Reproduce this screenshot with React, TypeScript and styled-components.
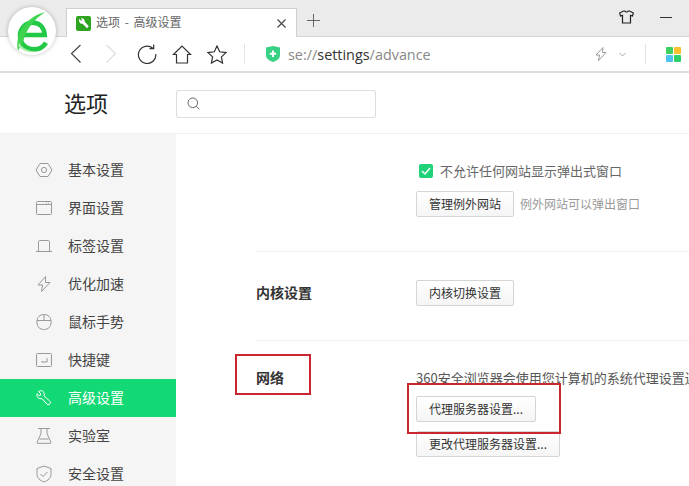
import React from 'react'
import styled, { createGlobalStyle } from 'styled-components'

// Types
type NavItem = { label: string; icon: React.ReactNode; active?: boolean }

const GlobalStyle = createGlobalStyle`
  html, body {
    margin: 0;
    padding: 0;
    background: #fff;
    overflow: hidden;
  }
  body {
    font-family: "Noto Sans CJK SC", "Noto Sans", sans-serif;
    color: #333;
  }
`

const navIconProps = { width: 18, height: 18, viewBox: '0 0 18 18', fill: 'none', stroke: 'currentColor', strokeWidth: 1 }

const navItems: NavItem[] = [
  {
    label: '基本设置',
    icon: (
      <svg {...navIconProps}>
        <path d="M5 2.500h8L17 9l-4 6.500H5L1 9z" />
        <circle cx="9" cy="9" r="2.600" />
      </svg>
    ),
  },
  {
    label: '界面设置',
    icon: (
      <svg {...navIconProps}>
        <rect x="1.500" y="2.500" width="15" height="13" rx="1" />
        <path d="M1.500 5.500h15M11 4h.8M13 4h.8" />
      </svg>
    ),
  },
  {
    label: '标签设置',
    icon: (
      <svg {...navIconProps}>
        <path d="M3.500 14V4.500a1 1 0 0 1 1-1h9a1 1 0 0 1 1 1V14M1 14.500h16" />
      </svg>
    ),
  },
  {
    label: '优化加速',
    icon: (
      <svg {...navIconProps}>
        <path d="M10.500 1.500 3 10h4.500l-1 6.500L15 7.500h-4.500z" />
      </svg>
    ),
  },
  {
    label: '鼠标手势',
    icon: (
      <svg {...navIconProps}>
        <rect x="2" y="1.500" width="14" height="15" rx="6.500" />
        <path d="M2 7.500h14M9 1.500v6" />
      </svg>
    ),
  },
  {
    label: '快捷键',
    icon: (
      <svg {...navIconProps}>
        <rect x="1.500" y="2.500" width="15" height="13" rx="1" />
        <path d="M12 7v4H6.500M6.500 11l1-1" />
      </svg>
    ),
  },
  {
    label: '高级设置',
    active: true,
    icon: (
      <svg {...navIconProps}>
        <path d="M6.500 1.500 3.500 2.500 6 5 4.500 7 2 4.700C1.300 7 2.500 9.700 6 9.800l1-.3 5 5.700c1.200 1 3.300.2 3.500-1.500 0-.7-.4-1.300-1-1.900L9 7C9.600 4.300 8.800 2.300 6.500 1.500z" />
      </svg>
    ),
  },
  {
    label: '实验室',
    icon: (
      <svg {...navIconProps}>
        <path d="M3 1.500h12M6 1.500v5L2 15.500a.6.6 0 0 0 .6.8h12.800a.6.6 0 0 0 .6-.8L12 6.500v-5M4.500 12h9" />
      </svg>
    ),
  },
  {
    label: '安全设置',
    icon: (
      <svg {...navIconProps}>
        <path d="M9 1 2 3.500V9c0 4 3 6.500 7 8 4-1.500 7-4 7-8V3.500z" />
        <path d="M5.500 9 8 11.500l4.500-4.500" />
      </svg>
    ),
  },
]

export default function App(): JSX.Element {
  return (
    <Page>
      <GlobalStyle />

      <TabStrip>
        <Tab>
          <TabIcon>
            <svg width="15" height="15" viewBox="0 0 15 15">
              <rect width="15" height="15" rx="2" fill="#2ea31f" />
              <path d="M3.200 2.800 5.300 5 6 3.600 4.700 2.400C6.800 1.700 9 3.200 8.600 5.500L12.800 10.300 11 12.200 6.600 7.800C4.300 8.300 2.400 5.600 3.200 2.800z" fill="#fff" />
            </svg>
          </TabIcon>
          <TabTitle>选项 - 高级设置</TabTitle>
          <TabClose>
            <svg width="9" height="9" viewBox="0 0 9 9" stroke="#444" strokeWidth="1.100">
              <path d="M.5.500l8 8M8.500.500l-8 8" />
            </svg>
          </TabClose>
        </Tab>
        <NewTab>
          <svg width="13" height="13" viewBox="0 0 13 13" stroke="#666" strokeWidth="1">
            <path d="M6.500 0v13M0 6.500h13" />
          </svg>
        </NewTab>
        <WindowControls>
          <svg width="15" height="14" viewBox="0 0 15 14" fill="none" stroke="#222" strokeWidth="1.200">
            <path d="M4.500 1h1.300c.4 1.300 3 1.300 3.400 0h1.300L14.300 3l-.8 3-2-.6V13H3.500V5.400l-2 .6L.7 3z" />
          </svg>
          <Minimize />
        </WindowControls>
      </TabStrip>

      <Logo>
        <svg width="48" height="48" viewBox="24 21 144 144" fill="none">
          <path
            d="M62 105H134C132 80 116 68 98 68 76 68 60 86 60 108 60 132 80 148 102 148 118 148 130 141 138 128"
            stroke="#22c944"
            strokeWidth="14"
          />
          <path d="M54 152C44 108 72 52 136 36 104 56 80 85 70 122z" fill="#3fd44f" />
          <path d="M58 128C66 144 84 152 106 155 84 160 62 150 54 136z" fill="#a6eca6" />
        </svg>
      </Logo>

      <Toolbar>
        <NavButtons>
          <ToolIcon $gap={15}>
            <svg width="12" height="20" viewBox="0 0 12 20" fill="none" stroke="#444" strokeWidth="1.200">
              <path d="M10.500 1 1.500 9.500l9 9" />
            </svg>
          </ToolIcon>
          <ToolIcon $gap={16}>
            <svg width="12" height="20" viewBox="0 0 12 20" fill="none" stroke="#ddd" strokeWidth="1.200">
              <path d="M1.500 1l9 8.500-9 9" />
            </svg>
          </ToolIcon>
          <ToolIcon $gap={15}>
            <svg width="20" height="20" viewBox="0 0 20 20" fill="none" stroke="#333" strokeWidth="1.200">
              <path d="M15.800 4.200A8.700 8.700 0 1 0 18.800 10" />
              <path d="M12.500 4.700h4.200V.5" />
            </svg>
          </ToolIcon>
          <ToolIcon $gap={15}>
            <svg width="20" height="19" viewBox="0 0 20 19" fill="none" stroke="#333" strokeWidth="1.200">
              <path d="M1.500 9.500 10 1l8.500 8.500h-3V18h-11V9.500z" />
            </svg>
          </ToolIcon>
          <ToolIcon $gap={0}>
            <svg width="20" height="19" viewBox="0 0 20 19" fill="none" stroke="#333" strokeWidth="1.200">
              <path d="M10 1l2.700 5.800 6.300.8-4.600 4.300 1.200 6.200L10 15l-5.600 3.100 1.200-6.200L1 7.600l6.300-.8z" />
            </svg>
          </ToolIcon>
        </NavButtons>
        <ToolSeparator $left={17} />
        <ShieldWrap>
          <svg width="14" height="16" viewBox="0 0 14 16">
            <path d="M7 0 14 1.500V9c0 3.500-3 5.700-7 7-4-1.300-7-3.500-7-7V1.500z" fill="#36d183" />
            <path d="M7 4.500v6.500M3.800 7.700h6.400" stroke="#fff" strokeWidth="2" />
          </svg>
        </ShieldWrap>
        <Url>
          se://<strong>settings</strong>/advance
        </Url>
        <UrlActions>
          <svg width="12" height="14" viewBox="0 0 12 14" fill="none" stroke="#999" strokeWidth="1">
            <path d="M8 .5 1 8h3.500L3.500 13.500 11 5.500H7.500z" />
          </svg>
          <svg width="7" height="5" viewBox="0 0 7 5" fill="none" stroke="#aaa" strokeWidth="1">
            <path d="M.5 1 3.500 4l3-3" />
          </svg>
        </UrlActions>
        <ToolSeparator $left={7} />
        <AppsGrid>
          <AppsCell $color="#3fcf5e" />
          <AppsCell $color="#fbc02d" />
          <AppsCell $color="#4fc3f0" />
          <AppsCell $color="#2fd06a" />
        </AppsGrid>
      </Toolbar>

      <Header>
        <HeaderTitle>选项</HeaderTitle>
        <SearchBox>
          <svg width="13" height="13" viewBox="0 0 13 13" fill="none" stroke="#666" strokeWidth="1">
            <circle cx="5.800" cy="5.800" r="4.800" />
            <path d="M9.300 9.300l3 3" />
          </svg>
        </SearchBox>
      </Header>

      <Main>
        <Sidebar>
          {navItems.map((item) => (
            <NavRow key={item.label} $active={item.active}>
              <NavIcon $active={item.active}>{item.icon}</NavIcon>
              <NavLabel>{item.label}</NavLabel>
            </NavRow>
          ))}
        </Sidebar>

        <Content>
          <Section $pad="27px 0 34px">
            <SectionLabel $lineHeight={24} />
            <SectionBody>
              <CheckRow>
                <CheckBox>
                  <svg width="10" height="8" viewBox="0 0 10 8" fill="none" stroke="#fff" strokeWidth="1.400">
                    <path d="M1 4l3 3 5-6" />
                  </svg>
                </CheckBox>
                <CheckText>不允许任何网站显示弹出式窗口</CheckText>
              </CheckRow>
              <ButtonRow>
                <Button>管理例外网站</Button>
                <Hint>例外网站可以弹出窗口</Hint>
              </ButtonRow>
            </SectionBody>
          </Section>

          <Section $pad="28px 0 34px">
            <SectionLabel $lineHeight={24}>内核设置</SectionLabel>
            <SectionBody>
              <Button>内核切换设置</Button>
            </SectionBody>
          </Section>

          <Section $pad="27px 0 0" $last>
            <SectionLabel $lineHeight={18}>网络</SectionLabel>
            <SectionBody>
              <Description>360安全浏览器会使用您计算机的系统代理设置连接到网络</Description>
              <Stack>
                <Button>代理服务器设置...</Button>
                <Button>更改代理服务器设置...</Button>
              </Stack>
            </SectionBody>
          </Section>
        </Content>
      </Main>

      <Annotation $left={235} $top={354} $width={76} $height={41} />
      <Annotation $left={407} $top={383} $width={154} $height={51} />
    </Page>
  )
}

const Page = styled.div`
  position: relative;
  width: 689px;
  height: 486px;
  overflow: hidden;
  background: #fff;
`

const TabStrip = styled.div`
  display: flex;
  align-items: flex-end;
  height: 36px;
  padding-left: 66px;
  background: #ebebeb;
  border-bottom: 1px solid #d4d4d4;
`

const Tab = styled.div`
  display: flex;
  align-items: center;
  width: 231px;
  height: 29px;
  margin-bottom: -1px;
  padding: 0 10px 0 9px;
  box-sizing: border-box;
  background: #fff;
  border: 1px solid #cfcfcf;
  border-bottom: none;
`

const TabIcon = styled.span`
  display: flex;
  margin-right: 5px;
`

const TabTitle = styled.span`
  flex: 1;
  margin-bottom: 3px;
  font-size: 12px;
  word-spacing: 2px;
  color: #666;
  white-space: pre;
`

const TabClose = styled.span`
  display: flex;
`

const NewTab = styled.span`
  display: flex;
  margin: 0 0 9px 10px;
`

const WindowControls = styled.div`
  display: flex;
  align-items: center;
  gap: 26px;
  margin-left: auto;
  margin-right: 17px;
  margin-bottom: 12px;
`

const Minimize = styled.span`
  width: 12px;
  height: 1px;
  background: #333;
`

const Logo = styled.div`
  position: absolute;
  left: 8px;
  top: 7px;
  width: 48px;
  height: 48px;
  border-radius: 50%;
  background: #fff;
  box-shadow: 0 0 4px rgba(0, 0, 0, 0.25);
`

const Toolbar = styled.div`
  display: flex;
  align-items: center;
  height: 34px;
  padding-left: 66px;
  border-bottom: 2px solid #dedede;
`

const NavButtons = styled.div`
  display: flex;
  align-items: center;
`

const ToolIcon = styled.span<{ $gap: number }>`
  display: flex;
  justify-content: center;
  width: 20px;
  margin-right: ${(p) => p.$gap}px;
`

const ToolSeparator = styled.span<{ $left: number }>`
  width: 1px;
  height: 20px;
  background: #e2e2e2;
  margin-left: ${(p) => p.$left}px;
`

const ShieldWrap = styled.span`
  display: flex;
  margin-left: 21px;
`

const Url = styled.div`
  margin-left: 8px;
  font-family: "Open Sans", "Noto Sans", sans-serif;
  font-size: 14.4px;
  color: #888;
  strong {
    font-weight: 400;
    color: #333;
  }
`

const UrlActions = styled.div`
  display: flex;
  align-items: center;
  gap: 12px;
  margin-left: auto;
  margin-right: 12px;
`

const AppsGrid = styled.div`
  display: grid;
  grid-template-columns: 7px 7px;
  grid-auto-rows: 7px;
  gap: 1px;
  margin: 0 8px 0 20px;
`

const AppsCell = styled.span<{ $color: string }>`
  background: ${(p) => p.$color};
  border-radius: 1px;
`

const Header = styled.div`
  display: flex;
  align-items: center;
  height: 60px;
  border-bottom: 1px solid #efefef;
`

const HeaderTitle = styled.h1`
  width: 112px;
  margin: 0 0 2px 64px;
  font-size: 22px;
  font-weight: 400;
  color: #222;
`

const SearchBox = styled.div`
  display: flex;
  align-items: center;
  width: 200px;
  height: 28px;
  margin-top: 1px;
  padding-left: 10px;
  box-sizing: border-box;
  border: 1px solid #ddd;
  border-radius: 2px;
`

const Main = styled.div`
  display: flex;
  height: 352px;
`

const Sidebar = styled.nav`
  width: 176px;
  flex-shrink: 0;
  padding-top: 17px;
  box-sizing: border-box;
  background: #f5f5f5;
`

const NavRow = styled.div<{ $active?: boolean }>`
  display: flex;
  align-items: center;
  height: 38px;
  padding-left: 35px;
  font-size: 14px;
  color: ${(p) => (p.$active ? '#fff' : '#444')};
  background: ${(p) => (p.$active ? '#13d975' : 'transparent')};
`

const NavIcon = styled.span<{ $active?: boolean }>`
  display: flex;
  width: 33px;
  color: ${(p) => (p.$active ? '#fff' : '#999')};
`

const NavLabel = styled.span`
  margin-bottom: 2px;
`

const Content = styled.main`
  flex: 1;
  min-width: 0;
  padding-left: 80px;
  overflow: hidden;
`

const Section = styled.section<{ $pad: string; $last?: boolean }>`
  display: flex;
  padding: ${(p) => p.$pad};
  border-bottom: ${(p) => (p.$last ? 'none' : '1px solid #efefef')};
`

const SectionLabel = styled.div<{ $lineHeight: number }>`
  width: 160px;
  flex-shrink: 0;
  font-size: 14px;
  line-height: ${(p) => p.$lineHeight}px;
  font-weight: 700;
  color: #333;
`

const SectionBody = styled.div`
  display: flex;
  flex-direction: column;
  align-items: flex-start;
  min-width: 0;
`

const CheckRow = styled.label`
  display: flex;
  align-items: center;
  height: 20px;
  margin-left: 3px;
  margin-bottom: 10px;
  font-size: 13px;
  color: #666;
`

const CheckBox = styled.span`
  display: flex;
  align-items: center;
  justify-content: center;
  width: 14px;
  height: 14px;
  margin-right: 7px;
  border-radius: 2px;
  background: #1fd27a;
`

const CheckText = styled.span`
  margin-bottom: 2px;
`

const ButtonRow = styled.div`
  display: flex;
  align-items: center;
`

const Button = styled.button`
  height: 26px;
  padding: 0 12px 2px;
  font-family: inherit;
  font-size: 12px;
  color: #333;
  white-space: nowrap;
  background: linear-gradient(#fff, #f5f5f5);
  border: 1px solid #d5d5d5;
  border-radius: 2px;
`

const Hint = styled.span`
  margin: 0 0 2px 6px;
  font-size: 12px;
  color: #999;
`

const Description = styled.div`
  height: 20px;
  line-height: 19px;
  font-size: 13px;
  color: #555;
  white-space: nowrap;
`

const Stack = styled.div`
  display: flex;
  flex-direction: column;
  align-items: flex-start;
  gap: 9px;
  margin-top: 8px;
`

// Red markers drawn over the screenshot
const Annotation = styled.div<{ $left: number; $top: number; $width: number; $height: number }>`
  position: absolute;
  left: ${(p) => p.$left}px;
  top: ${(p) => p.$top}px;
  width: ${(p) => p.$width}px;
  height: ${(p) => p.$height}px;
  box-sizing: border-box;
  border: 2px solid #c8272f;
`
